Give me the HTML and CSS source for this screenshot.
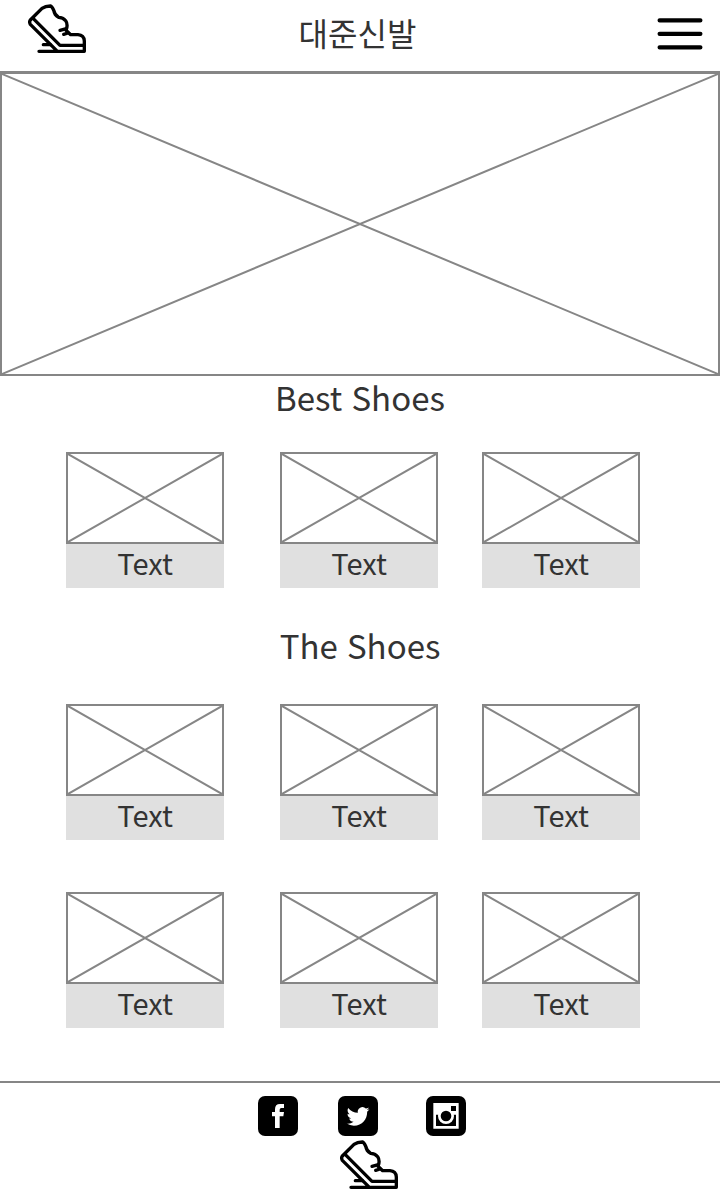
FILE: index.html
```html
<!DOCTYPE html>
<html lang="ko">
<head>
<meta charset="utf-8">
<meta name="viewport" content="width=device-width, initial-scale=1">
<title>대준신발</title>
<link rel="stylesheet" href="styles.css">
</head>
<body>
<svg class="defs" aria-hidden="true">
  <symbol id="shoe" viewBox="24 13 174 150">
    <g fill="none" stroke="#000" stroke-width="10" stroke-linecap="round" stroke-linejoin="round">
      <path d="M57 155H193V124Q192 106 174 105H152L138 92Q145 75 137 63Q129 53 116 53Q103 45 102 34Q96 20 91 19Q76 19 66 26L31 61Q27 67 31 74L110 153"/>
      <path d="M40 57L120 137H193M70 135H91M120 92L139 87M131 104L144 100"/>
    </g>
  </symbol>
  <symbol id="cross" viewBox="0 0 100 100" preserveAspectRatio="none">
    <path class="cross-line" d="M0 0L100 100M100 0L0 100"/>
  </symbol>
</svg>

<header class="header">
  <a class="logo" href="#" aria-label="대준신발"><svg class="shoe"><use href="#shoe"/></svg></a>
  <h1 class="title">대준신발</h1>
  <button class="menu" type="button" aria-label="Menu">
    <svg class="menu-icon" viewBox="0 0 138 96"><path d="M8 7H130M8 47.5H130M8 88H130" stroke="#000" stroke-width="13" stroke-linecap="round"/></svg>
  </button>
</header>

<main>
  <div class="banner frame"><svg class="cross"><use href="#cross"/></svg></div>

  <section class="section">
    <h2 class="heading">Best Shoes</h2>
    <ul class="row">
      <li class="card"><div class="frame thumb"><svg class="cross"><use href="#cross"/></svg></div><p class="caption">Text</p></li>
      <li class="card"><div class="frame thumb"><svg class="cross"><use href="#cross"/></svg></div><p class="caption">Text</p></li>
      <li class="card"><div class="frame thumb"><svg class="cross"><use href="#cross"/></svg></div><p class="caption">Text</p></li>
    </ul>
  </section>

  <section class="section section-all">
    <h2 class="heading">The Shoes</h2>
    <ul class="row">
      <li class="card"><div class="frame thumb"><svg class="cross"><use href="#cross"/></svg></div><p class="caption">Text</p></li>
      <li class="card"><div class="frame thumb"><svg class="cross"><use href="#cross"/></svg></div><p class="caption">Text</p></li>
      <li class="card"><div class="frame thumb"><svg class="cross"><use href="#cross"/></svg></div><p class="caption">Text</p></li>
    </ul>
    <ul class="row">
      <li class="card"><div class="frame thumb"><svg class="cross"><use href="#cross"/></svg></div><p class="caption">Text</p></li>
      <li class="card"><div class="frame thumb"><svg class="cross"><use href="#cross"/></svg></div><p class="caption">Text</p></li>
      <li class="card"><div class="frame thumb"><svg class="cross"><use href="#cross"/></svg></div><p class="caption">Text</p></li>
    </ul>
  </section>
</main>

<footer class="footer">
  <nav class="social" aria-label="Social">
    <a class="social-link" href="#" aria-label="Facebook">
      <svg class="social-icon" viewBox="0 0 120 120"><path fill="#fff" d="M51 96V61H42V48H51V40Q51 24 66 24H78V36H70Q65 36 65 41V48H78L76 61H65V96Z"/></svg>
    </a>
    <a class="social-link" href="#" aria-label="Twitter">
      <svg class="social-icon" viewBox="0 0 120 120"><path fill="#fff" transform="translate(26 27) scale(2.85)" d="M23.95 4.57a10 10 0 0 1-2.82.77 4.96 4.96 0 0 0 2.16-2.72c-.95.55-2 .95-3.13 1.18a4.92 4.92 0 0 0-8.38 4.48C7.69 8.1 4.07 6.13 1.64 3.16a4.82 4.82 0 0 0-.67 2.48c0 1.71.87 3.21 2.19 4.1a4.9 4.9 0 0 1-2.23-.62v.06a4.92 4.92 0 0 0 3.95 4.83 5 5 0 0 1-2.21.08 4.94 4.94 0 0 0 4.6 3.42A9.87 9.87 0 0 1 0 19.54a14 14 0 0 0 7.55 2.21c9.05 0 14-7.5 14-13.98 0-.21 0-.42-.02-.63a9.94 9.94 0 0 0 2.46-2.55z"/></svg>
    </a>
    <a class="social-link social-link-last" href="#" aria-label="Instagram">
      <svg class="social-icon" viewBox="0 0 120 120"><path fill="#fff" fill-rule="evenodd" d="M22 21H98V98H22ZM75 30V45H90V30ZM30 56V90H90V56Z"/><circle cx="60" cy="60" r="24" fill="#fff"/><path d="M75 30H90V45H75Z"/><circle cx="60" cy="60" r="16"/></svg>
    </a>
  </nav>
  <a class="footer-logo" href="#" aria-label="대준신발"><svg class="shoe"><use href="#shoe"/></svg></a>
</footer>
</body>
</html>
```

FILE: styles.css
```css
* {
  box-sizing: border-box;
}

body {
  margin: 0;
  background: #fff;
  color: #333;
  font-family: "Noto Sans CJK KR", "Noto Sans", sans-serif;
}

h1, h2, p, ul {
  margin: 0;
  padding: 0;
  font-weight: 400;
}

svg {
  display: block;
}

.defs {
  position: absolute;
  width: 0;
  height: 0;
}

.header {
  display: grid;
  grid-template-columns: 1fr auto 1fr;
  align-items: start;
  height: 72px;
  padding: 4px 17px 0 28px;
  border-bottom: 1px solid #868686;
}

.logo {
  justify-self: start;
}

.shoe {
  width: 58px;
  height: 50px;
}

.title {
  margin-right: 16px;
  font-size: 32px;
  line-height: 56px;
}

.menu {
  justify-self: end;
  margin: 14px 0 0;
  padding: 0;
  border: 0;
  background: none;
  cursor: pointer;
}

.menu-icon {
  width: 46px;
  height: 32px;
}

.frame {
  border: 2px solid #868686;
}

.cross {
  width: 100%;
  height: 100%;
}

.cross-line {
  fill: none;
  stroke: #868686;
  stroke-width: 2px;
  vector-effect: non-scaling-stroke;
}

.banner {
  height: 304px;
}

.section {
  padding-bottom: 36px;
}

.section-all {
  padding-bottom: 53px;
}

.heading {
  padding-bottom: 34px;
  font-size: 33px;
  line-height: 42px;
  text-align: center;
}

.section-all .heading {
  padding-bottom: 38px;
}

.row {
  display: flex;
  padding: 0 80px 0 66px;
  list-style: none;
}

.row + .row {
  margin-top: 52px;
}

.card {
  flex: 1;
}

.card:nth-child(1) {
  margin-right: 56px;
}

.card:nth-child(2) {
  margin-right: 44px;
}

.thumb {
  aspect-ratio: 158 / 92;
}

.caption {
  height: 44px;
  background: #e0e0e0;
  font-size: 29px;
  line-height: 36px;
  text-align: center;
}

.footer {
  display: flex;
  flex-direction: column;
  align-items: center;
  gap: 4px;
  padding: 13px 0 10px;
  border-top: 2px solid #868686;
}

.social {
  display: flex;
  gap: 40px;
  margin-left: 4px;
}

.social-link {
  border-radius: 7px;
  background: #000;
}

.social-link-last {
  margin-left: 8px;
}

.social-icon {
  width: 40px;
  height: 40px;
}

.footer-logo {
  margin-left: 18px;
}
```
